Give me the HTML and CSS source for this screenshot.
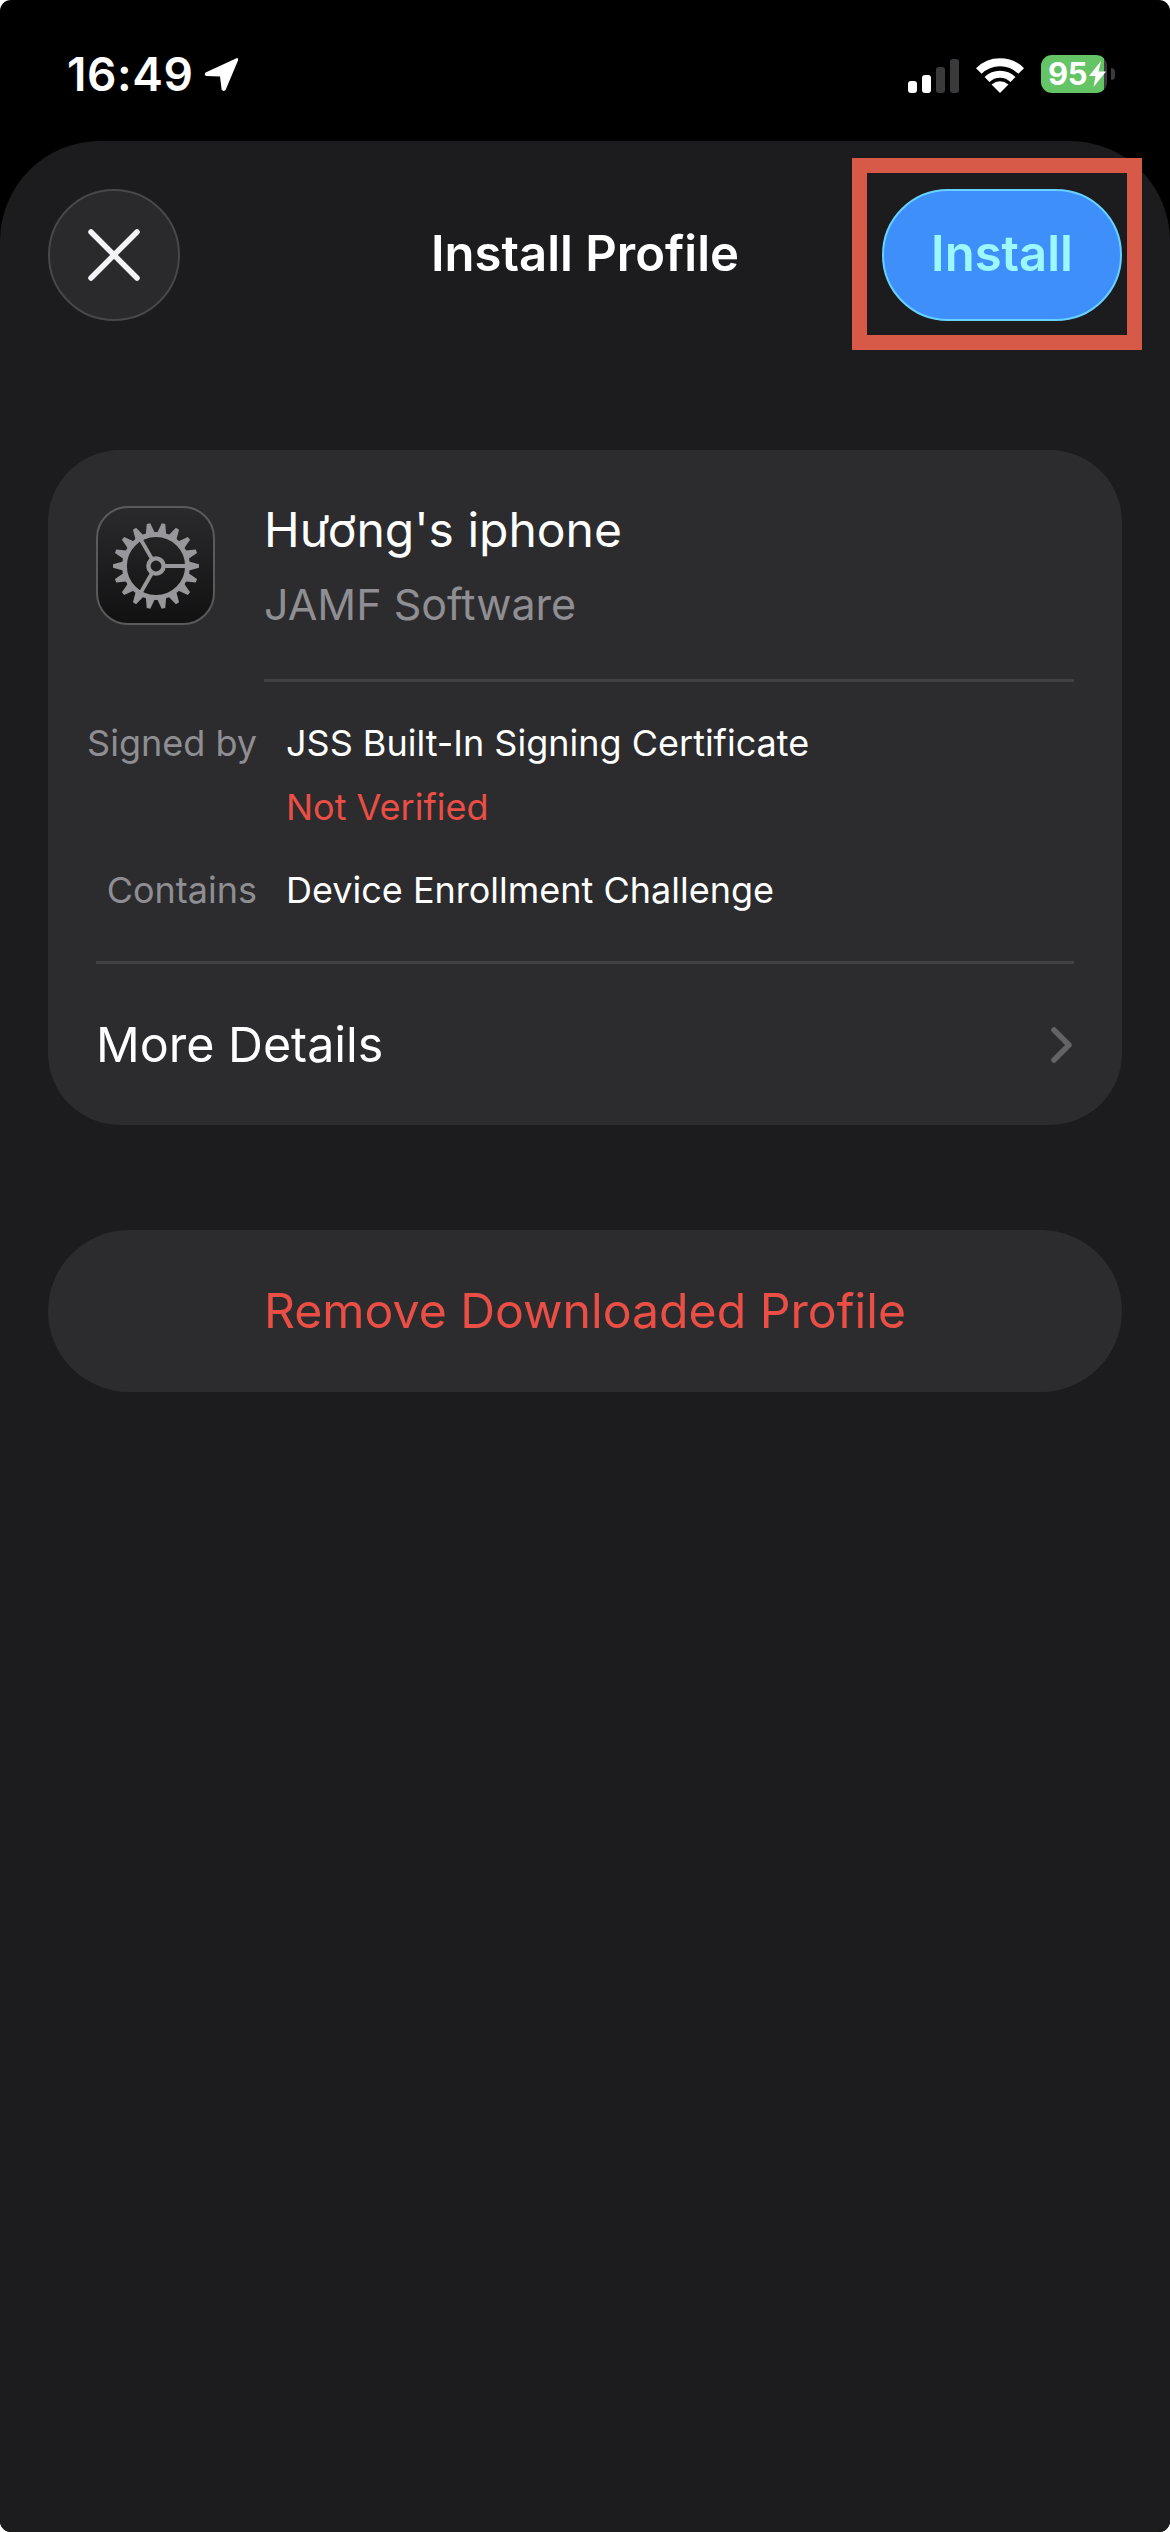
FILE: index.html
```html
<!DOCTYPE html>
<html lang="en">
<head>
<meta charset="utf-8">
<title>Install Profile</title>
<link rel="stylesheet" href="styles.css">
</head>
<body>
<div class="screen">
  <header class="status">
    <div class="status-left">
      <span class="time">16:49</span>
      <svg class="loc" viewBox="0 0 36 36" width="36" height="36"><path d="M33.5 2.2 L2.6 16.5 Q0.6 19 3.4 20 L17 20.4 L18.6 33.6 Q20.4 36 22.6 34 L35 4.5 Q35.6 1.6 33.5 2.2 Z" fill="#fff"/></svg>
    </div>
    <div class="status-right">
      <div class="signal">
        <i class="bar b1"></i><i class="bar b2"></i><i class="bar b3"></i><i class="bar b4"></i>
      </div>
      <svg class="wifi" viewBox="0 0 48 36" width="48" height="36">
        <path d="M2.8 14 A30 30 0 0 1 45.2 14" fill="none" stroke="#fff" stroke-width="8"/>
        <path d="M11 22.6 A18.5 18.5 0 0 1 37 22.6" fill="none" stroke="#fff" stroke-width="7"/>
        <path d="M24 36 L15.5 27.5 Q24 21 32.5 27.5 Z" fill="#fff"/>
      </svg>
      <div class="battery">
        <div class="battery-body">
          <span class="battery-num">95</span>
          <svg class="bolt" viewBox="0 0 17 26" width="17" height="26"><path d="M12 0 L0 15 H6.5 L4.5 26 L17 10.5 H9.5 Z" fill="#fff"/></svg>
        </div>
        <i class="battery-tip"></i>
      </div>
    </div>
  </header>

  <main class="sheet">
    <div class="nav">
      <button class="close" type="button" aria-label="Close">
        <svg viewBox="0 0 60 60" width="60" height="60"><path d="M7 7 L53 53 M53 7 L7 53" stroke="#f2f2f7" stroke-width="5.5" stroke-linecap="round"/></svg>
      </button>
      <h1 class="title">Install Profile</h1>
      <button class="install" type="button">Install</button>
    </div>

    <section class="card">
      <div class="profile">
        <div class="app-icon">
          <svg viewBox="-50 -50 100 100" width="100" height="100">
            <defs><polygon id="tooth" points="-5,-31 -1.8,-43 1.8,-43 5,-31" fill="#98989c"/></defs>
            <use href="#tooth" transform="rotate(10)"/><use href="#tooth" transform="rotate(30)"/><use href="#tooth" transform="rotate(50)"/>
            <use href="#tooth" transform="rotate(70)"/><use href="#tooth" transform="rotate(90)"/><use href="#tooth" transform="rotate(110)"/>
            <use href="#tooth" transform="rotate(130)"/><use href="#tooth" transform="rotate(150)"/><use href="#tooth" transform="rotate(170)"/>
            <use href="#tooth" transform="rotate(190)"/><use href="#tooth" transform="rotate(210)"/><use href="#tooth" transform="rotate(230)"/>
            <use href="#tooth" transform="rotate(250)"/><use href="#tooth" transform="rotate(270)"/><use href="#tooth" transform="rotate(290)"/>
            <use href="#tooth" transform="rotate(310)"/><use href="#tooth" transform="rotate(330)"/><use href="#tooth" transform="rotate(350)"/>
            <circle r="31.5" fill="none" stroke="#98989c" stroke-width="4.8"/>
            <path d="M8 0 H30 M-4 -7 L-15.5 -27 M-4 7 L-15.5 27" stroke="#98989c" stroke-width="3.8"/>
            <circle r="7.6" fill="none" stroke="#98989c" stroke-width="4.4"/>
          </svg>
        </div>
        <div class="profile-text">
          <div class="profile-name">Hương's iphone</div>
          <div class="profile-org">JAMF Software</div>
        </div>
      </div>
      <div class="divider divider-inset"></div>
      <dl class="details">
        <dt>Signed by</dt>
        <dd>JSS Built-In Signing Certificate<span class="not-verified">Not Verified</span></dd>
        <dt>Contains</dt>
        <dd>Device Enrollment Challenge</dd>
      </dl>
      <div class="divider"></div>
      <div class="more">
        <span>More Details</span>
        <svg viewBox="0 0 24 40" width="24" height="40"><path d="M4 5 L19 20 L4 35" fill="none" stroke="#636366" stroke-width="5.5" stroke-linecap="round" stroke-linejoin="round"/></svg>
      </div>
    </section>

    <button class="remove" type="button">Remove Downloaded Profile</button>
  </main>

  <div class="highlight"></div>
</div>
</body>
</html>
```

FILE: styles.css
```css
* { box-sizing: border-box; margin: 0; padding: 0; }
html, body { background: #fff; }
body { width: 1170px; height: 2532px; overflow: hidden; font-family: Inter, "Noto Sans", "Liberation Sans", sans-serif; color: #fff; }
button { font-family: inherit; border: 0; cursor: pointer; }

.screen { position: relative; width: 1170px; height: 2532px; display: flex; flex-direction: column; background: #000; border-radius: 11px; overflow: hidden; }

.status { height: 141px; flex: none; display: flex; justify-content: space-between; align-items: flex-start; padding: 55px 55px 0 67px; }
.status-left { display: flex; align-items: center; gap: 9px; }
.time { font-size: 46px; line-height: 38px; font-weight: 600; letter-spacing: 0.6px; }
.loc { display: block; }
.status-right { display: flex; align-items: flex-end; height: 38px; }
.signal { display: flex; align-items: flex-end; gap: 5px; margin-right: 17px; }
.bar { display: block; width: 9px; border-radius: 3px; }
.b1 { height: 12px; background: #fff; }
.b2 { height: 18px; background: #fff; }
.b3 { height: 26px; background: #3a3a3c; }
.b4 { height: 34px; background: #3a3a3c; }
.wifi { display: block; margin-right: 17px; }
.battery { display: flex; align-items: center; gap: 4px; }
.battery-body { width: 66px; height: 38px; border-radius: 11px; background: linear-gradient(90deg, #65c466 0 95%, #3a3a3c 95%); display: flex; align-items: center; padding-left: 7px; gap: 2px; }
.battery-num { font-size: 31px; line-height: 38px; font-weight: 700; color: #fff; letter-spacing: -0.5px; }
.bolt { display: block; }
.battery-tip { display: block; width: 4px; height: 12px; background: #3a3a3c; border-radius: 0 5px 5px 0; }

.sheet { flex: 1; background: #1c1c1e; border-radius: 100px 100px 0 0; padding: 48px 48px 0; display: flex; flex-direction: column; }
.nav { display: grid; grid-template-columns: 1fr auto 1fr; align-items: center; height: 132px; }
.close { width: 132px; height: 132px; border-radius: 50%; background: #2a2a2c; border: 2px solid #48484a; display: flex; align-items: center; justify-content: center; }
.close svg { display: block; }
.title { font-size: 49px; font-weight: 600; color: #fff; letter-spacing: 0; line-height: 60px; margin-top: -3px; }
.install { justify-self: end; width: 240px; height: 132px; border-radius: 66px; background: #3f8ffa; border: 2px solid #67d2ff; color: #9bf8ff; font-size: 49px; font-weight: 600; padding-bottom: 3px; }

.card { margin-top: 129px; height: 675px; background: #2c2c2e; border-radius: 72px; padding: 56px 48px 0; display: flex; flex-direction: column; }
.profile { display: flex; gap: 49px; height: 173px; }
.app-icon { width: 119px; height: 119px; flex: none; border-radius: 32px; border: 2px solid #5a5a5c; background: linear-gradient(180deg, #2a2a2c 0%, #111112 100%); display: flex; align-items: center; justify-content: center; }
.app-icon svg { display: block; }
.profile-text { display: flex; flex-direction: column; }
.profile-name { font-size: 48px; line-height: 60px; color: #fff; margin-top: -6px; }
.profile-org { font-size: 43px; line-height: 60px; color: #8e8e93; margin-top: 14px; }
.divider { height: 3px; background: #414143; flex: none; }
.divider-inset { margin-left: 168px; }
.details { display: grid; grid-template-columns: 171px 1fr; column-gap: 29px; height: 279px; margin-left: -10px; padding-top: 38px; font-size: 36px; line-height: 46px; grid-auto-rows: min-content; row-gap: 37px; }
.details dt { color: #8e8e93; text-align: right; white-space: nowrap; }
.details dd { color: #fff; }
.not-verified { display: block; color: #eb4e45; margin-top: 18px; }
.more { flex: 1; display: flex; justify-content: space-between; align-items: center; font-size: 48.4px; color: #fff; }
.more svg { display: block; }

.remove { margin-top: 105px; height: 162px; border-radius: 81px; background: #2c2c2e; color: #eb4e45; font-size: 48.2px; font-weight: 400; padding-bottom: 1px; }

.highlight { position: absolute; left: 852px; top: 158px; width: 290px; height: 192px; border: 15px solid #d75a49; }
```
